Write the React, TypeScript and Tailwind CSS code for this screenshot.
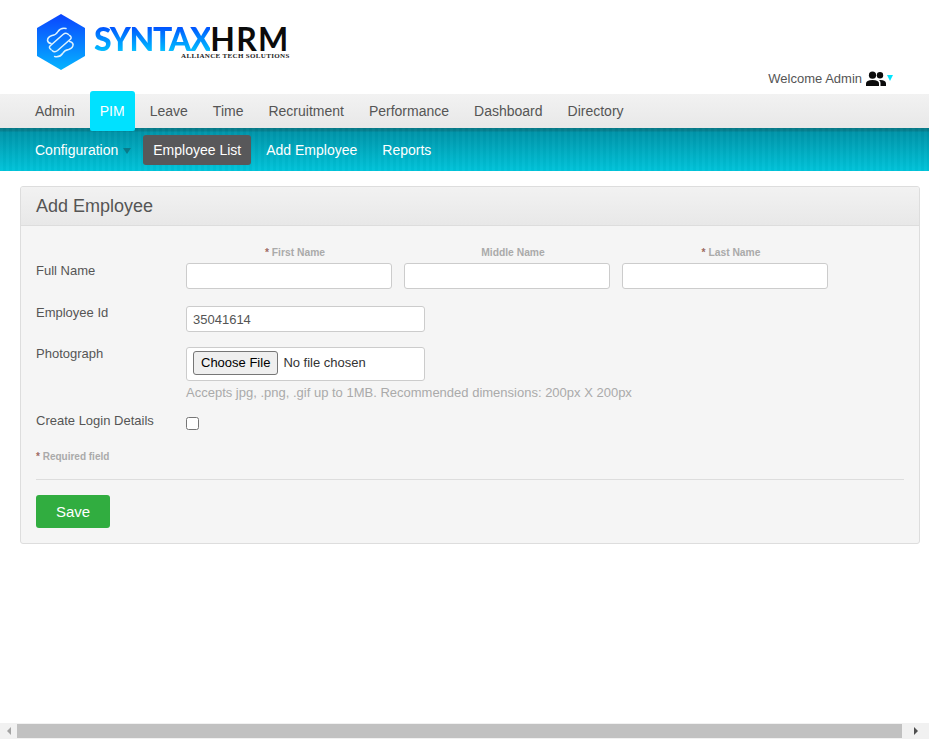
import React from "react";

const topNav = ["Admin", "PIM", "Leave", "Time", "Recruitment", "Performance", "Dashboard", "Directory"];

function Logo() {
  const half = (
    <>
      <path d="M30 15.5 Q24.5 14.5 22 18.5 Q20 22 16 22.5 Q11.5 24 11.5 27.5 Q12 30 15 30.5" />
      <path d="M15 36.5 Q12.5 35 14 33 L27 21.5 Q30 19 32.5 21.5" />
    </>
  );
  return (
    <div className="flex items-start">
      <svg width="50" height="58" viewBox="0 0 50 58" className="mt-[13px] ml-[36px] shrink-0">
        <defs>
          <linearGradient id="hex" x1="0" y1="0" x2="0" y2="1">
            <stop offset="0" stopColor="#0a44ff" />
            <stop offset="1" stopColor="#05b4ff" />
          </linearGradient>
        </defs>
        <polygon points="25,1 49,15 49,43 25,57 1,43 1,15" fill="url(#hex)" />
        <g fill="none" stroke="#dff4ff" strokeWidth="1.5" strokeLinecap="round">
          {half}
          <g transform="rotate(180 24.3 29.5)">{half}</g>
        </g>
      </svg>
      <div className="relative mt-[26px] ml-[8px] h-[36px] w-[210px]">
        <div className="flex items-baseline font-['Lato',sans-serif] text-[32px] leading-[26px]">
          <span className="bg-gradient-to-b from-[#0a4bff] to-[#16c2ff] bg-clip-text font-black tracking-[-1.3px] text-transparent">SYNTAX</span>
          <span className="font-bold tracking-[1.2px] text-[#0b0b0b]">HRM</span>
        </div>
        <span className="absolute left-[87px] top-[26px] whitespace-nowrap font-['Liberation_Serif',serif] text-[7px] font-bold leading-[8px] tracking-[0.33px] text-[#222]">
          ALLIANCE TECH SOLUTIONS
        </span>
      </div>
    </div>
  );
}

function Header() {
  return (
    <header className="relative flex h-[94px] justify-between bg-white">
      <Logo />
      <div className="mr-[36px] mt-[69px] flex h-[20px] items-center text-[13px] text-[#555]">
        <span>Welcome Admin</span>
        <svg width="20" height="16" viewBox="0 0 20 16" className="ml-[4px] -mt-[1px]" fill="#0b0b0b">
          <circle cx="6.5" cy="4.2" r="3.6" />
          <circle cx="14" cy="4.2" r="3.2" />
          <path d="M0 15 V12.5 Q0 9 6.5 9 Q13 9 13 12.5 V15 Z" />
          <path d="M14.5 15 V12 Q14.5 10.2 13 9 Q20 8.6 20 12.5 V15 Z" />
        </svg>
        <span className="mb-[2px] ml-[1px] h-0 w-0 border-x-[3px] border-t-[6px] border-x-transparent border-t-[#00e5ff]" />
      </div>
    </header>
  );
}

function TopNav() {
  return (
    <nav className="flex h-[34px] items-center bg-gradient-to-b from-[#f2f2f2] to-[#e8e8e8] pl-[22.5px] pt-[1px] text-[14px] text-[#555]">
      {topNav.map((item) =>
        item === "PIM" ? (
          <span
            key={item}
            className="relative z-10 mx-[2.5px] -mt-[1px] flex h-[40px] w-[45px] items-center justify-center rounded-t-[3px] rounded-b-[2px] bg-[#00e1ff] text-white"
          >
            {item}
          </span>
        ) : (
          <span key={item} className="px-[12.5px]">
            {item}
          </span>
        )
      )}
    </nav>
  );
}

function SubNav() {
  return (
    <nav className="flex h-[43px] items-center bg-[repeating-linear-gradient(90deg,rgba(255,255,255,0.02)_0,rgba(255,255,255,0.02)_3px,rgba(0,0,0,0.02)_3px,rgba(0,0,0,0.02)_6px),linear-gradient(180deg,#067a89_0,#067f8f_3px,#0094a9_4px,#00c4da_100%)] pl-[25px] pt-[1px] text-[14px] text-white">
      <span className="flex items-center px-[10px]">
        Configuration
        <span className="ml-[5px] mt-[2px] h-0 w-0 border-x-[4px] border-t-[6px] border-x-transparent border-t-[#0a7a89]" />
      </span>
      <span className="ml-[2px] -mt-[1px] flex h-[30px] items-center rounded-[3px] bg-[#58585a] px-[10px] pt-[1px]">Employee List</span>
      <span className="ml-[5px] px-[10px]">Add Employee</span>
      <span className="ml-[5px] px-[10px]">Reports</span>
    </nav>
  );
}

const inputClass = "h-[26px] w-[206px] rounded-[3px] border border-[#ccc] bg-white px-[6px] text-[13px] text-[#555]";

function Star() {
  return <span className="text-[#9e6b63]">* </span>;
}

function NameField({ label, required }: { label: string; required?: boolean }) {
  return (
    <div className="flex w-[206px] flex-col items-center">
      <span className="h-[18px] pl-[12px] text-[10.3px] font-bold leading-[15px] text-[#aaa]">
        {required && <Star />}
        {label}
      </span>
      <input className={inputClass} type="text" />
    </div>
  );
}

function Form() {
  return (
    <section className="mx-[20px] mt-[15px] w-[900px] overflow-hidden rounded-[3px] border border-[#ddd] bg-[#f5f5f5]">
      <h1 className="flex h-[39px] items-center border-b border-[#ddd] bg-gradient-to-b from-[#f2f2f2] to-[#e8e8e8] px-[15px] text-[18px] font-normal text-[#555]">
        Add Employee
      </h1>
      <div className="px-[15px] text-[13px] text-[#555]">
        <div className="mt-[19px] flex">
          <label className="mt-[16px] w-[150px] leading-[20px]">Full Name</label>
          <div className="flex gap-[12px]">
            <NameField label="First Name" required />
            <NameField label="Middle Name" />
            <NameField label="Last Name" required />
          </div>
        </div>
        <div className="mt-[17px] flex">
          <label className="w-[150px] leading-[20px] -mt-[3px]">Employee Id</label>
          <input className="h-[26px] w-[239px] rounded-[3px] border border-[#ccc] bg-white px-[6px] text-[13px] text-[#555]" defaultValue="35041614" type="text" />
        </div>
        <div className="mt-[15px] flex">
          <label className="w-[150px] leading-[14px]">Photograph</label>
          <div>
            <div className="flex h-[34px] w-[239px] items-center rounded-[3px] border border-[#ccc] bg-white px-[6px]">
              <input
                type="file"
                className="-mt-[2px] w-[226px] font-['Liberation_Sans',sans-serif] text-[13px] text-[#333] file:mr-[5px] file:rounded-[3px] file:border file:border-[#767676] file:bg-[#efefef] file:px-[7px] file:py-[1px] file:text-[13px] file:text-black"
              />
            </div>
            <p className="mt-[3px] text-[13px] leading-[17px] text-[#aaa]">
              Accepts jpg, .png, .gif up to 1MB. Recommended dimensions: 200px X 200px
            </p>
          </div>
        </div>
        <div className="mt-[11px] flex">
          <label className="mt-[1px] w-[150px] leading-[16px]">Create Login Details</label>
          <input type="checkbox" className="mt-[5px] h-[13px] w-[13px]" />
        </div>
        <p className="mt-[19px] text-[10px] font-bold leading-[15px] text-[#aaa]">
          <Star />Required field
        </p>
        <hr className="mt-[15px] border-[#ddd]" />
        <button className="mb-[15px] mt-[15px] block h-[33px] w-[74px] rounded-[3px] bg-[#31ad40] pt-[1px] text-[15px] text-white">
          Save
        </button>
      </div>
    </section>
  );
}

function ScrollBar() {
  return (
    <div className="flex h-[16px] items-stretch bg-[#f1f1f1]">
      <div className="flex w-[17px] items-center justify-center">
        <span className="h-0 w-0 border-y-[4px] border-r-[4px] border-y-transparent border-r-[#a3a3a3]" />
      </div>
      <div className="my-[1px] w-[885px] bg-[#c1c1c1]" />
      <div className="flex flex-1 items-center justify-center">
        <span className="h-0 w-0 border-y-[4px] border-l-[4px] border-y-transparent border-l-[#505050]" />
      </div>
    </div>
  );
}

export default function App() {
  return (
    <div className="flex h-[739px] w-[929px] flex-col overflow-hidden bg-white font-['Liberation_Sans',Arial,sans-serif]">
      <div className="flex-1">
        <Header />
        <TopNav />
        <SubNav />
        <Form />
      </div>
      <ScrollBar />
    </div>
  );
}
